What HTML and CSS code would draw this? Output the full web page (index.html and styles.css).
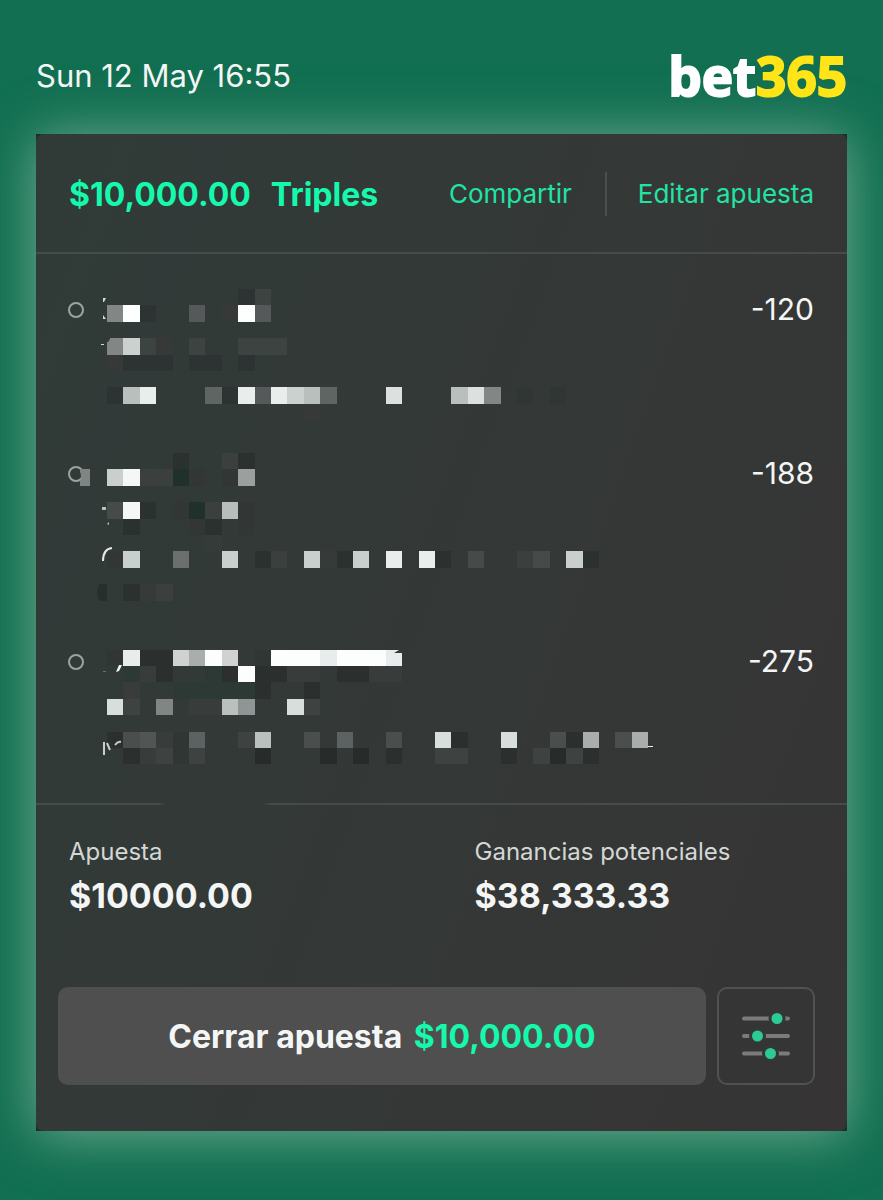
FILE: index.html
```html
<!DOCTYPE html>
<html lang="es">
<head>
<meta charset="utf-8">
<meta name="viewport" content="width=device-width, initial-scale=1">
<title>bet365 - Triples</title>
<link rel="stylesheet" href="styles.css">
</head>
<body>
<header class="topbar">
  <time class="date" datetime="05-12T16:55">Sun 12 May 16:55</time>
  <div class="logo">bet<span class="logo-num">365</span></div>
</header>
<main class="slip">
  <div class="slip-inner">
    <div class="slip-head">
      <h1 class="title"><span>$10,000.00</span><span>Triples</span></h1>
      <div class="actions">
        <button class="link" type="button">Compartir</button>
        <button class="link link-edit" type="button">Editar apuesta</button>
      </div>
    </div>

    <ul class="picks">
      <li class="pick">
        <span class="ring"></span>
        <svg class="mosaic" height="132" aria-hidden="true">
          <g transform="translate(17 1) scale(16.4)" shape-rendering="crispEdges">
            <path fill="#2c3332" d="M8 0h1v1h-1zM2 1h1v1h-1zM1 4h3v1h-3zM5 4h2v1h-2zM8 4h1v1h-1zM0 6h1v1h-1zM7 6h1v1h-1z"/>
            <path fill="#303634" d="M25 6h1v1h-1zM27 6h1v1h-1z"/>
            <path fill="#363938" d="M7 1h1v1h-1zM3 3h1v1h-1zM0 4h1v1h-1zM12 7h1v1h-1z"/>
            <path fill="#3d4341" d="M9 0h1v1h-1zM2 3h1v1h-1zM5 3h1v1h-1zM8 3h3v1h-3z"/>
            <path fill="#565959" d="M5 1h1v1h-1zM9 1h1v1h-1zM9 6h1v1h-1z"/>
            <path fill="#5f6563" d="M6 6h1v1h-1zM13 6h1v1h-1z"/>
            <path fill="#828685" d="M0 1h1v1h-1zM0 3h1v1h-1zM23 6h1v1h-1z"/>
            <path fill="#b9bfbd" d="M1 6h1v1h-1zM12 6h1v1h-1zM21 6h1v1h-1z"/>
            <path fill="#cbd1cf" d="M1 3h1v1h-1zM11 6h1v1h-1z"/>
            <path fill="#dce1df" d="M17 6h1v1h-1zM22 6h1v1h-1z"/>
            <path fill="#e9eeec" d="M2 6h1v1h-1zM8 6h1v1h-1zM10 6h1v1h-1z"/>
            <path fill="#fdfefe" d="M1 1h1v1h-1zM8 1h1v1h-1z"/>
          </g>
          <path fill="#303b37" d="M16 48h5l-2 5-3 2z"/>
          <path fill="#d5dad8" d="M13 10h3l-2 4h-1zM13 27l3 4h-3zM11 56h3v1h-3z"/>
        </svg>
        <span class="odds">-120</span>
      </li>
      <li class="pick">
        <span class="ring"></span>
        <svg class="mosaic" height="156" aria-hidden="true">
          <path fill="#808483" d="M-10 17h10v17h-10v-5q2-5 0-9z"/>
          <g transform="translate(17 1) scale(16.4)" shape-rendering="crispEdges">
            <path fill="#20302b" d="M4 1h1v1h-1zM5 3h1v1h-1z"/>
            <path fill="#2b312f" d="M4 0h1v1h-1zM8 0h1v1h-1zM2 3h1v1h-1zM1 4h1v1h-1zM6 4h1v1h-1zM9 6h1v1h-1zM14 6h1v1h-1zM20 6h1v1h-1zM29 6h1v1h-1zM1 8h1v1h-1z"/>
            <path fill="#323635" d="M5 1h1v1h-1zM7 1h1v1h-1zM4 3h1v1h-1zM8 3h1v1h-1zM5 4h1v1h-1zM8 4h1v1h-1zM0 6h1v1h-1z"/>
            <path fill="#3b403f" d="M7 0h1v1h-1zM2 1h2v1h-2zM6 3h1v1h-1zM10 6h1v1h-1zM25 6h1v1h-1zM3 8h1v1h-1z"/>
            <path fill="#363b3a" d="M6 5h1v1h-1zM13 6h1v1h-1zM2 8h1v1h-1z"/>
            <path fill="#464b4a" d="M0 3h1v1h-1zM22 6h1v1h-1zM26 6h1v1h-1z"/>
            <path fill="#6b706f" d="M4 6h1v1h-1z"/>
            <path fill="#9b9f9e" d="M8 1h1v1h-1z"/>
            <path fill="#b8bebc" d="M7 3h1v1h-1z"/>
            <path fill="#c9cfcd" d="M0 1h1v1h-1zM1 6h1v1h-1zM7 6h1v1h-1zM12 6h1v1h-1zM15 6h1v1h-1zM28 6h1v1h-1z"/>
            <path fill="#e9eeec" d="M17 6h1v1h-1zM19 6h1v1h-1z"/>
            <path fill="#f4f7f6" d="M1 1h1v1h-1zM1 3h1v1h-1z"/>
          </g>
          <path fill="#262f2b" d="M17 132h-7q-6 8 0 17h7z"/>
          <path fill="#b9bfbd" d="M12 55h4v3h-4zM17 72l2-2v3z"/>
          <path fill="none" stroke="#e5e9e7" stroke-width="2" d="M13 109q0-12 9-13"/>
        </svg>
        <span class="odds">-188</span>
      </li>
      <li class="pick">
        <span class="ring"></span>
        <svg class="mosaic" height="131" aria-hidden="true">
          <g transform="translate(17 9.500) scale(16.4)" shape-rendering="crispEdges">
            <path fill="#272c2b" d="M13 6h1v1h-1zM15 6h1v1h-1zM27 6h1v1h-1zM9 6h1v1h-1z"/>
            <path fill="#303634" d="M0 0h1v1h-1zM9 0h1v1h-1zM4 5h1v1h-1zM4 6h1v1h-1z"/>
            <path fill="#2b302f" d="M2 0h2v1h-2zM3 1h1v1h-1zM7 1h1v1h-1zM9 1h2v1h-2zM14 1h2v1h-2zM9 2h1v1h-1zM12 2h1v1h-1zM0 5h1v1h-1zM21 5h1v1h-1zM28 5h1v1h-1zM1 6h1v1h-1zM17 6h1v1h-1zM24 6h1v1h-1zM29 6h1v1h-1z"/>
            <path fill="#2c3935" d="M1 1h1v1h-1zM6 1h1v1h-1zM4 2h5v1h-5z"/>
            <path fill="#383d3b" d="M2 1h1v1h-1zM11 1h2v1h-2zM16 1h2v1h-2zM1 2h1v1h-1zM5 3h2v1h-2zM3 5h1v1h-1zM2 6h1v1h-1z"/>
            <path fill="#3e4342" d="M1 3h1v1h-1zM12 3h1v1h-1zM8 5h1v1h-1zM3 6h1v1h-1zM5 6h1v1h-1zM20 6h2v1h-2zM26 6h1v1h-1zM28 6h1v1h-1z"/>
            <path fill="#4a4f4e" d="M1 5h1v1h-1zM12 5h1v1h-1zM17 5h1v1h-1zM27 5h1v1h-1zM31 5h1v1h-1z"/>
            <path fill="#515655" d="M2 5h1v1h-1z"/>
            <path fill="#5c6261" d="M5 5h1v1h-1zM14 5h1v1h-1z"/>
            <path fill="#818584" d="M3 3h1v1h-1z"/>
            <path fill="#8f9594" d="M8 3h1v1h-1z"/>
            <path fill="#a9adac" d="M5 0h1v1h-1zM29 5h1v1h-1zM32 5h1v1h-1z"/>
            <path fill="#bac0be" d="M7 3h1v1h-1zM9 5h1v1h-1z"/>
            <path fill="#cfd2d1" d="M4 0h1v1h-1zM7 0h1v1h-1z"/>
            <path fill="#d8dedb" d="M0 3h1v1h-1zM11 3h1v1h-1zM20 5h1v1h-1zM24 5h1v1h-1z"/>
            <path fill="#e9ecec" d="M1 0h1v1h-1zM13 0h1v1h-1zM17 0h1v1h-1z"/>
            <path fill="#fcfdfd" d="M6 0h1v1h-1zM8 1h1v1h-1zM10 0h3v1h-3zM14 0h3v1h-3z"/>
          </g>
          <path fill="#333937" d="M304 13l5-3h4v3z"/>
          <path fill="#f0f3f2" d="M26 32l3-7h3l-3 6zM558 106h5v1h-5z"/>
          <path fill="#6b706f" d="M13 31h3v1h-3z"/>
          <path fill="none" stroke="#c9cfcd" stroke-width="2" d="M14 102v13M17 103l3 7M25 105q3-4 6-3"/>
        </svg>
        <span class="odds">-275</span>
      </li>
    </ul>

    <dl class="totals">
      <div class="total"><dt>Apuesta</dt><dd>$10000.00</dd></div>
      <div class="total"><dt>Ganancias potenciales</dt><dd>$38,333.33</dd></div>
    </dl>

    <div class="cashout">
      <button class="close-bet" type="button">Cerrar apuesta <span class="amount">$10,000.00</span></button>
      <button class="settings" type="button" aria-label="Ajustes">
        <svg width="50" height="50" viewBox="0 0 50 50" aria-hidden="true">
          <g stroke="#7b7b7b" stroke-width="4" stroke-linecap="round">
            <path d="M3 7.500H47M3 25H47M3 42.500H47"/>
          </g>
          <g fill="#2bcb94" stroke="#353736" stroke-width="3">
            <circle cx="36" cy="7.500" r="7"/><circle cx="16.500" cy="25" r="7"/><circle cx="29.500" cy="42.500" r="7"/>
          </g>
        </svg>
      </button>
    </div>
  </div>
</main>
</body>
</html>
```
FILE: styles.css
```css
* { box-sizing: border-box; }
body {
  margin: 0;
  min-height: 100vh;
  padding: 0 36px 68px;
  background: #126f51;
  color: #f4f6f5;
  font-family: Inter, "Liberation Sans", sans-serif;
}
button { font: inherit; color: inherit; border: 0; background: none; padding: 0; cursor: pointer; }
.topbar {
  display: flex;
  justify-content: space-between;
  align-items: center;
  padding: 42px 0 24px;
}
.date { font-size: 31px; line-height: 68px; }
.logo {
  font-family: "Open Sans", sans-serif;
  font-weight: 700;
  font-size: 53px;
  line-height: 68px;
  color: #fff;
  -webkit-text-stroke: 2px currentColor;
}
.logo-num { color: #ffe418; }
.slip {
  background: #202c28;
  box-shadow: 0 3px 50px 0 #70ad92;
}
.slip-inner {
  border-radius: 8px;
  background: linear-gradient(110deg, #303b38 0%, #343837 55%, #363434 100%);
}
.slip-head {
  display: flex;
  justify-content: space-between;
  align-items: center;
  height: 120px;
  padding: 2px 33px 0;
  border-bottom: 2px solid #454d4a;
}
.title {
  display: flex;
  gap: 20px;
  margin: 0;
  font-size: 32px;
  font-weight: 700;
  color: #15f9ad;
}
.actions { display: flex; align-items: center; }
.link { font-size: 26px; line-height: 44px; color: #23e3a3; }
.link-edit { margin-left: 33px; padding-left: 31px; border-left: 2px solid #4a504e; }
.picks {
  display: flex;
  flex-direction: column;
  gap: 32px;
  margin: 0;
  padding: 34px 33px 32px 32px;
  list-style: none;
}
.pick { display: flex; align-items: flex-start; }
.ring {
  flex: none;
  width: 16px;
  height: 16px;
  margin: 14px 6px 0 0;
  border: 2px solid #9ca3a0;
  border-radius: 50%;
}
.mosaic { flex: 1; min-width: 0; overflow: visible; }
.odds { width: 90px; text-align: right; font-size: 30px; line-height: 42px; }
.totals {
  display: grid;
  grid-template-columns: 1fr 1fr;
  margin: 0;
  padding: 33px 0 67px;
  background: linear-gradient(90deg, #454d4a 0 15%, transparent 16% 28%, #454d4a 29%) top / 100% 2px no-repeat;
}
.total { padding-left: 33px; }
.total dt { font-size: 24px; line-height: 32px; color: #d3d7d5; }
.total dd { margin: 4px 0 0; font-size: 34px; line-height: 48px; font-weight: 700; }
.cashout { display: flex; gap: 11px; padding: 0 32px 46px 22px; }
.close-bet {
  flex: 1;
  height: 98px;
  border-radius: 10px;
  background: #4f4f4f;
  font-size: 32px;
  font-weight: 700;
}
.amount { margin-left: 4px; color: #15f9ad; }
.settings {
  display: grid;
  place-items: center;
  width: 98px;
  height: 98px;
  border: 2px solid #505252;
  border-radius: 10px;
}
```
